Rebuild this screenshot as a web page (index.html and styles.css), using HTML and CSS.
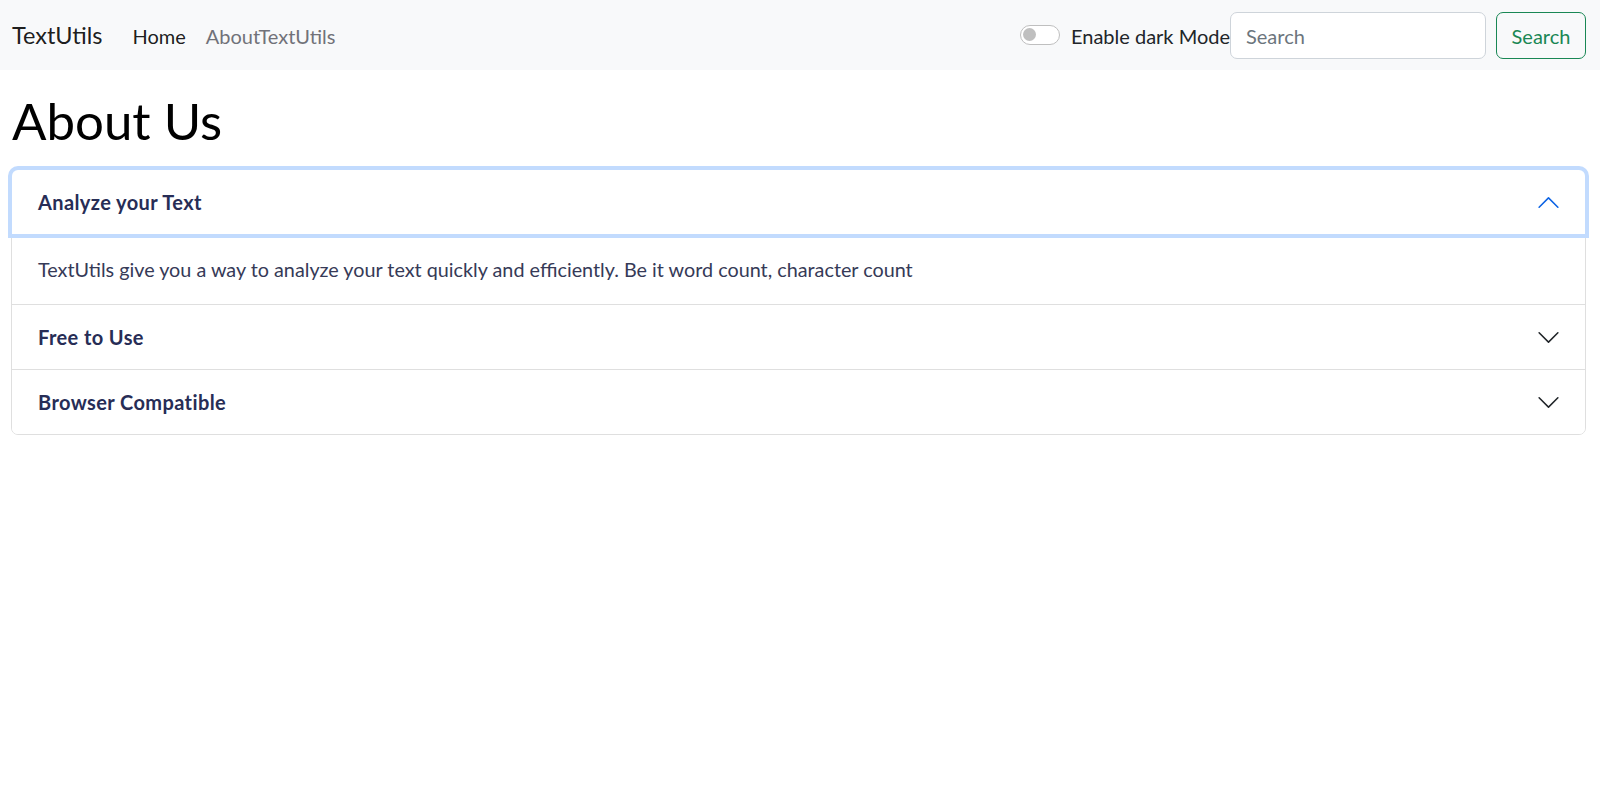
FILE: index.html
```html
<!DOCTYPE html>
<html lang="en">
<head>
<meta charset="utf-8">
<title>TextUtils - About Us</title>
<link rel="stylesheet" href="styles.css">
</head>
<body>
<div class="page">
  <nav class="navbar">
    <a class="brand" href="#">TextUtils</a>
    <ul class="nav-links">
      <li><a class="nav-link active" href="#">Home</a></li>
      <li><a class="nav-link" href="#">AboutTextUtils</a></li>
    </ul>
    <div class="nav-right">
      <label class="switch-wrap">
        <span class="switch"><span class="knob"></span></span>
        <span class="switch-label">Enable dark Mode</span>
      </label>
      <form class="search-form">
        <input class="search-input" type="search" placeholder="Search">
        <button class="search-btn" type="button">Search</button>
      </form>
    </div>
  </nav>

  <main class="main">
    <h1 class="title">About Us</h1>
    <div class="accordion">
      <div class="acc-item">
        <button class="acc-btn open" type="button">
          <span>Analyze your Text</span>
          <svg class="chev up" viewBox="0 0 16 16" width="25" height="25"><path fill="#0c63e4" fill-rule="evenodd" d="M1.646 4.646a.5.5 0 0 1 .708 0L8 10.293l5.646-5.647a.5.5 0 0 1 .708.708l-6 6a.5.5 0 0 1-.708 0l-6-6a.5.5 0 0 1 0-.708z"/></svg>
        </button>
        <div class="acc-body">TextUtils give you a way to analyze your text quickly and efficiently. Be it word count, character count</div>
      </div>
      <div class="acc-item">
        <button class="acc-btn" type="button">
          <span>Free to Use</span>
          <svg class="chev" viewBox="0 0 16 16" width="25" height="25"><path fill="#212529" fill-rule="evenodd" d="M1.646 4.646a.5.5 0 0 1 .708 0L8 10.293l5.646-5.647a.5.5 0 0 1 .708.708l-6 6a.5.5 0 0 1-.708 0l-6-6a.5.5 0 0 1 0-.708z"/></svg>
        </button>
      </div>
      <div class="acc-item">
        <button class="acc-btn" type="button">
          <span>Browser Compatible</span>
          <svg class="chev" viewBox="0 0 16 16" width="25" height="25"><path fill="#212529" fill-rule="evenodd" d="M1.646 4.646a.5.5 0 0 1 .708 0L8 10.293l5.646-5.647a.5.5 0 0 1 .708.708l-6 6a.5.5 0 0 1-.708 0l-6-6a.5.5 0 0 1 0-.708z"/></svg>
        </button>
      </div>
    </div>
  </main>
</div>
</body>
</html>
```
FILE: styles.css
```css
* { box-sizing: border-box; }
html, body { margin: 0; padding: 0; background: #fff; }
body {
  font-family: Lato, "Noto Sans", sans-serif;
  font-size: 20px;
  line-height: 1.5;
  color: #212529;
}
.page { width: 1600px; }

/* navbar */
.navbar {
  height: 70px;
  padding: 1px 14px 0 12px;
  background: #f8f9fa;
  display: flex;
  align-items: center;
}
.brand {
  font-size: 23.5px;
  line-height: 1.5;
  color: rgba(0,0,0,.9);
  text-decoration: none;
  margin-right: 20px;
  margin-top: 1px;
}
.nav-links {
  list-style: none;
  margin: 0;
  padding: 0;
  display: flex;
}
.nav-link {
  display: block;
  padding: 10px 10px;
  color: #717279;
  text-decoration: none;
}
.nav-link.active { color: rgba(0,0,0,.9); }
.nav-right {
  margin-left: auto;
  display: flex;
  align-items: center;
}
.switch-wrap {
  display: flex;
  align-items: center;
  gap: 11px;
}
.switch {
  width: 40px;
  height: 20px;
  border: 1px solid #bfbfbf;
  border-radius: 10px;
  background: #fff;
  display: flex;
  align-items: center;
  padding-left: 2px;
  margin-top: -2px;
}
.knob {
  width: 13.5px;
  height: 13.5px;
  border-radius: 50%;
  background: #bfbfbf;
}
.switch-label { color: #212529; }
.search-form {
  display: flex;
  align-items: center;
  gap: 10px;
  margin: 0;
}
.search-input {
  width: 256px;
  height: 47px;
  padding: 0 15px;
  border: 1px solid #ced4da;
  border-radius: 7px;
  background: #fff;
  font-family: inherit;
  font-size: 20px;
  color: #212529;
  outline: none;
}
.search-input::placeholder { color: #6c757d; }
.search-btn {
  width: 90px;
  height: 47px;
  padding: 0;
  border: 1px solid #198754;
  border-radius: 7px;
  background: transparent;
  color: #198754;
  font-family: inherit;
  font-size: 20px;
  cursor: pointer;
}

/* main */
.main { padding: 0 14px 0 11px; }
.title {
  margin: 21px 0 18px;
  padding-left: 1px;
  font-size: 51px;
  font-weight: 400;
  line-height: 60px;
  color: #000;
}
.accordion {
  border: 1px solid #dfdfdf;
  border-radius: 7px;
}
.acc-item + .acc-item { border-top: 1px solid #dfdfdf; }
.acc-btn {
  display: flex;
  align-items: center;
  justify-content: space-between;
  width: 100%;
  height: 64px;
  padding: 0 24px 0 26px;
  border: 0;
  background: #fff;
  font-family: inherit;
  font-size: 20px;
  font-weight: 700;
  letter-spacing: 0.4px;
  color: #272d56;
  text-align: left;
  border-radius: 6px;
  cursor: pointer;
}
.acc-btn.open {
  position: relative;
  z-index: 2;
  border-radius: 6px 6px 0 0;
  box-shadow: 0 0 0 4px #c2dbfe;
}
.chev { display: block; flex: none; }
.chev.up { transform: rotate(180deg); }
.acc-body {
  padding: 20px 26px;
  font-size: 19.8px;
  line-height: 30px;
  color: #363a57;
}
```
